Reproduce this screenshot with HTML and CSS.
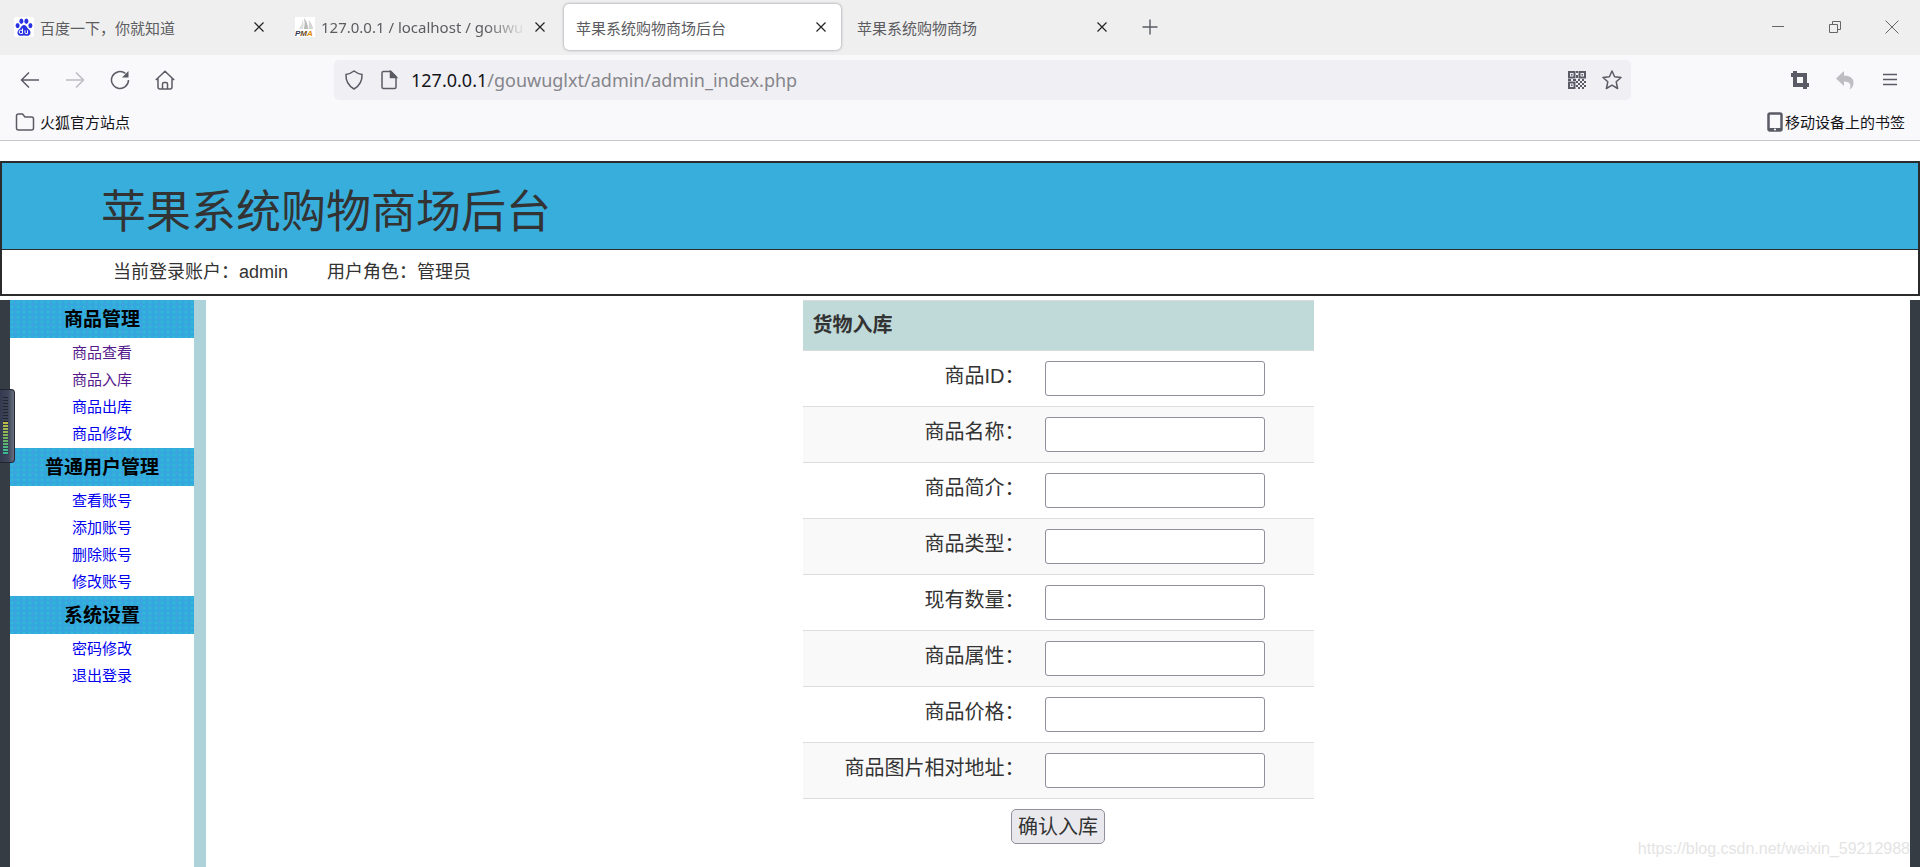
FILE: index.html
```html
<!DOCTYPE html>
<html lang="zh-CN">
<head>
<meta charset="utf-8">
<title>苹果系统购物商场后台</title>
<link rel="stylesheet" href="styles.css">
</head>
<body>
<div class="browser">
  <div class="tab-strip">
    <div class="tab">
      <svg class="favicon" viewBox="0 0 20 20"><rect width="20" height="20" rx="2" fill="#fff"/><g fill="#2932e1"><ellipse cx="3.600" cy="8.600" rx="2" ry="2.600"/><ellipse cx="7.400" cy="4.200" rx="2" ry="2.700"/><ellipse cx="12.400" cy="4.200" rx="2" ry="2.700"/><ellipse cx="16.400" cy="8.600" rx="2" ry="2.600"/><path d="M10 8c2.600 0 3 3 5 4.500 2.300 2 2 5.800-1 6.200-1.600.2-2.600-.3-4-.3s-2.400.5-4 .3c-3-.4-3.300-4.200-1-6.200C7 11 7.400 8 10 8z"/></g><path d="M8.500 11.500v5h-2a1.200 1.500 0 0 1 0-3.200h2M11 13.300v2.300q0 1 1 1h1.500v-3.300" fill="none" stroke="#fff"/></svg>
      <span class="tab-title">百度一下，你就知道</span>
      <button class="icon-button tab-close" aria-label="关闭"><svg class="glyph-small" viewBox="0 0 12 12"><path d="M1.500 1.500l9 9M10.500 1.500l-9 9"/></svg></button>
    </div>
    <div class="tab">
      <svg class="favicon" viewBox="0 0 20 20"><rect width="20" height="20" fill="#fff"/><path d="M4 12q3-4 4-10 1 6 0 10z" fill="#ddd"/><path d="M9 12q1.500-6 0-11 4 5 4 11z" fill="#b9b9b9"/><path d="M13.500 12q1-5 0-9 4 4 4.500 9z" fill="#d5d5d5"/><text class="favicon-text" x="0" y="19" fill="#33364f">P<tspan fill="#6b4522">M</tspan><tspan fill="#e08600">A</tspan></text></svg>
      <span class="tab-title tab-title-fade">127.0.0.1 / localhost / gouwu</span>
      <button class="icon-button tab-close" aria-label="关闭"><svg class="glyph-small" viewBox="0 0 12 12"><path d="M1.500 1.500l9 9M10.500 1.500l-9 9"/></svg></button>
    </div>
    <div class="tab tab-active">
      <span class="tab-title">苹果系统购物商场后台</span>
      <button class="icon-button tab-close" aria-label="关闭"><svg class="glyph-small" viewBox="0 0 12 12"><path d="M1.500 1.500l9 9M10.500 1.500l-9 9"/></svg></button>
    </div>
    <div class="tab">
      <span class="tab-title">苹果系统购物商场</span>
      <button class="icon-button tab-close" aria-label="关闭"><svg class="glyph-small" viewBox="0 0 12 12"><path d="M1.500 1.500l9 9M10.500 1.500l-9 9"/></svg></button>
    </div>
    <button class="icon-button new-tab" aria-label="新建标签页"><svg class="glyph-plus" viewBox="0 0 16 16"><path d="M8 .5v15M.5 8h15"/></svg></button>
    <div class="window-controls">
      <button class="icon-button" aria-label="最小化"><svg class="glyph-window" viewBox="0 0 14 14"><path d="M1 6.500h12"/></svg></button>
      <button class="icon-button" aria-label="还原"><svg class="glyph-window" viewBox="0 0 14 14"><path d="M1.500 4.500h8v8h-8zM4.500 4.500v-3h8v8h-3"/></svg></button>
      <button class="icon-button" aria-label="关闭窗口"><svg class="glyph-window" viewBox="0 0 14 14"><path d="M.5 .5l13 13M13.500 .5l-13 13"/></svg></button>
    </div>
  </div>

  <div class="nav-bar">
    <div class="nav-buttons">
      <button class="icon-button" aria-label="后退"><svg class="glyph" viewBox="0 0 20 20"><path d="M19 10H2M9 2.500L1.500 10 9 17.500"/></svg></button>
      <button class="icon-button is-disabled" aria-label="前进" disabled><svg class="glyph" viewBox="0 0 20 20"><path d="M1 10h17M11 2.500l7.500 7.500-7.500 7.500"/></svg></button>
      <button class="icon-button" aria-label="刷新"><svg class="glyph" viewBox="0 0 20 20"><path d="M18.500 10A8.500 8.500 0 1 1 15.500 3.500"/><path d="M18.500 1v6.500H12z" fill="currentColor" stroke="none"/></svg></button>
      <button class="icon-button" aria-label="主页"><svg class="glyph" viewBox="0 0 20 20"><path d="M.8 10L10 1.200 19.200 10M3 8.500V17q0 2 2 2h10q2 0 2-2V8.500M7.500 19v-5q0-1.500 1.500-1.500h2q1.500 0 1.500 1.500v5"/></svg></button>
    </div>
    <div class="url-bar">
      <svg class="glyph" viewBox="0 0 20 20"><path d="M10 1q4 3 8 3.500Q18.500 14 10 19 1.500 14 2 4.500 6 4 10 1z"/></svg>
      <svg class="glyph" viewBox="0 0 20 20"><path d="M4.500 1.500H12l5 5v10.500q0 1.500-1.500 1.500h-11Q3 18.500 3 17V3q0-1.500 1.500-1.500z"/><path d="M11.500 1.500l6 6h-6z" fill="currentColor"/></svg>
      <div class="url"><span class="url-host">127.0.0.1</span>/gouwuglxt/admin/admin_index.php</div>
      <button class="icon-button" aria-label="二维码"><svg class="glyph" viewBox="0 0 20 20"><path d="M2 2h5.500v5.500H2zM12.500 2H18v5.500h-5.500zM2 12.500h5.500V18H2z" stroke-width="2"/><path d="M4 4h1.500v1.500H4zM14.500 4H16v1.500h-1.500zM4 14.500h1.500V16H4zM9 1h2v2H9zM9 5h2v3H9zM1 9h3v2H1zM6 9h3v2H6zM11 9h2v2h-2zM15 9h2v2h-2zM17 11h2v2h-2zM9 11h2v2H9zM13 11h2v2h-2zM11 13h2v2h-2zM15 13h2v2h-2zM9 15h2v2H9zM13 15h2v2h-2zM17 15h2v2h-2zM11 17h2v2h-2zM15 17h2v2h-2z" fill="currentColor" stroke="none"/></svg></button>
      <button class="icon-button" aria-label="收藏"><svg class="glyph" viewBox="0 0 20 20"><path d="M10 1l2.600 5.800 6.400.7-4.800 4.300 1.400 6.700L10 15.200l-5.600 3.300 1.400-6.700L1 7.500l6.400-.7z" stroke-linejoin="round"/></svg></button>
    </div>
    <div class="tool-buttons">
      <button class="icon-button" aria-label="截图"><svg class="glyph" viewBox="0 0 20 20"><path d="M5 1v14h14M1 5h14v14" stroke-width="4"/></svg></button>
      <button class="icon-button is-disabled" aria-label="撤销" disabled><svg class="glyph" viewBox="0 0 20 20"><path d="M9 1v4.500q9.500 0 9.500 7.500 0 4-4 6.500 1-2.500 1-4-.5-4-6.500-4V16L1 8.500z" fill="currentColor" stroke="none"/></svg></button>
      <button class="icon-button" aria-label="菜单"><svg class="glyph" viewBox="0 0 20 20"><path d="M3 4.500h14M3 9.500h14M3 14.500h14"/></svg></button>
    </div>
  </div>

  <div class="bookmarks">
    <a class="bookmark" href="#"><svg class="glyph" viewBox="0 0 20 20"><path d="M1.500 16V4q0-2 2-2h4l2.500 3h6.500q2 0 2 2v9q0 2-2 2h-13q-2 0-2-2z"/></svg>火狐官方站点</a>
    <a class="bookmark bookmark-mobile" href="#"><svg class="glyph" viewBox="0 0 20 20"><path d="M5 1.500h10q1.500 0 1.500 1.500v14q0 1.500-1.500 1.500H5q-1.500 0-1.500-1.500V3Q3.500 1.500 5 1.500z" stroke-width="2.500"/><path d="M3.500 16h13v3h-13z" fill="currentColor" stroke="none"/><path d="M9 17.500h2" stroke="#fff"/></svg>移动设备上的书签</a>
  </div>
</div>

<header class="site-header">
  <h1 class="site-title">苹果系统购物商场后台</h1>
  <div class="account"><span>当前登录账户：admin</span><span>用户角色：管理员</span></div>
</header>

<div class="workspace">
  <nav class="sidebar">
    <h2 class="menu-heading">商品管理</h2>
    <ul class="menu">
      <li><a class="visited" href="#">商品查看</a></li>
      <li><a class="visited" href="#">商品入库</a></li>
      <li><a href="#">商品出库</a></li>
      <li><a href="#">商品修改</a></li>
    </ul>
    <h2 class="menu-heading">普通用户管理</h2>
    <ul class="menu">
      <li><a href="#">查看账号</a></li>
      <li><a href="#">添加账号</a></li>
      <li><a href="#">删除账号</a></li>
      <li><a href="#">修改账号</a></li>
    </ul>
    <h2 class="menu-heading">系统设置</h2>
    <ul class="menu">
      <li><a href="#">密码修改</a></li>
      <li><a href="#">退出登录</a></li>
    </ul>
  </nav>
  <main class="content">
    <form>
      <table class="stock-table">
        <thead><tr><th colspan="2">货物入库</th></tr></thead>
        <tbody>
          <tr><td class="field-name"><label for="f1">商品ID：</label></td><td class="field-value"><input id="f1" type="text"></td></tr>
          <tr><td class="field-name"><label for="f2">商品名称：</label></td><td class="field-value"><input id="f2" type="text"></td></tr>
          <tr><td class="field-name"><label for="f3">商品简介：</label></td><td class="field-value"><input id="f3" type="text"></td></tr>
          <tr><td class="field-name"><label for="f4">商品类型：</label></td><td class="field-value"><input id="f4" type="text"></td></tr>
          <tr><td class="field-name"><label for="f5">现有数量：</label></td><td class="field-value"><input id="f5" type="text"></td></tr>
          <tr><td class="field-name"><label for="f6">商品属性：</label></td><td class="field-value"><input id="f6" type="text"></td></tr>
          <tr><td class="field-name"><label for="f7">商品价格：</label></td><td class="field-value"><input id="f7" type="text"></td></tr>
          <tr><td class="field-name"><label for="f8">商品图片相对地址：</label></td><td class="field-value"><input id="f8" type="text"></td></tr>
        </tbody>
      </table>
      <div class="actions"><button class="submit" type="submit">确认入库</button></div>
    </form>
  </main>
  <div class="meter"><div class="meter-idle"></div><div class="meter-level"></div></div>
  <div class="watermark">https://blog.csdn.net/weixin_59212988</div>
</div>
</body>
</html>
```

FILE: styles.css
```css
* { box-sizing: border-box; }

body {
  margin: 0;
  min-height: 100vh;
  display: flex;
  flex-direction: column;
  background: #fff;
  color: #333;
  font-family: "Liberation Sans", "Noto Sans CJK SC", sans-serif;
}

button, input { font: inherit; color: inherit; }

/* Browser chrome */
.browser {
  background: #f9f9fb;
  border-bottom: 1px solid #c8c8c9;
  font-family: "Noto Sans", "Noto Sans CJK SC", sans-serif;
  font-size: 15px;
}

.icon-button {
  display: flex;
  align-items: center;
  justify-content: center;
  flex: none;
  padding: 0;
  border: 0;
  background: none;
  color: #5b5b66;
}
.is-disabled { color: #bdbdc2; }

svg { flex: none; }
.glyph, .glyph-small, .glyph-plus, .glyph-window {
  fill: none;
  stroke: currentColor;
}
.glyph { width: 20px; height: 20px; stroke-width: 1.5; color: inherit; }
.glyph-small { width: 12px; height: 12px; stroke-width: 1.2; }
.glyph-plus { width: 16px; height: 16px; stroke-width: 1.4; }
.glyph-window { width: 14px; height: 14px; }

.tab-strip {
  display: flex;
  align-items: center;
  gap: 4px;
  height: 55px;
  padding: 0 0 1px 2px;
  background: #efefef;
}
.tab {
  display: flex;
  align-items: center;
  gap: 6px;
  width: 277px;
  height: 46px;
  padding: 0 12px;
  border-radius: 5px;
  color: #5c5c61;
}
.tab-active {
  background: #fff;
  box-shadow: 0 0 3px #8c8c99;
}
.favicon { width: 20px; height: 20px; }
.favicon-text {
  font: italic 700 8px "Liberation Sans", sans-serif;
}
.tab-title {
  flex: 1;
  white-space: nowrap;
}
.tab-title-fade { mask-image: linear-gradient(to left, transparent, #000 40px); }
.tab-close { width: 16px; height: 24px; color: #222; }
.new-tab { width: 40px; height: 40px; margin-left: 4px; }
.window-controls {
  display: flex;
  margin-left: auto;
}
.window-controls .icon-button { width: 57px; height: 48px; color: #666; }

.nav-bar {
  display: flex;
  align-items: center;
  height: 50px;
}
.nav-buttons {
  display: flex;
  flex: 0 0 334px;
  padding-left: 7px;
}
.nav-buttons .icon-button,
.tool-buttons .icon-button { width: 45px; height: 40px; }
.url-bar {
  display: flex;
  flex: 1;
  align-items: center;
  gap: 15px;
  height: 40px;
  padding: 0 9px 0 10px;
  border-radius: 5px;
  background: #f0f0f4;
  color: #5b5b66;
}
.url {
  flex: 1;
  margin-left: -3px;
  font-size: 18px;
  color: #85858b;
}
.url-host { color: #15141a; }
.tool-buttons {
  display: flex;
  flex: 0 0 289px;
  justify-content: flex-end;
  padding-right: 8px;
}

.bookmarks {
  display: flex;
  align-items: center;
  justify-content: space-between;
  height: 35px;
  padding: 0 15px 2px;
}
.bookmark {
  display: flex;
  align-items: center;
  gap: 5px;
  color: #15141a;
  text-decoration: none;
}
.bookmark-mobile { gap: 0; }
.bookmark .glyph { color: #5b5b66; }

/* Site header */
.site-header {
  margin: 20px 0 4px;
  border: 2px solid #2b2b2e;
}
.site-title {
  height: 87px;
  margin: 0;
  padding: 11px 0 0 99px;
  border-bottom: 1px solid #2b2b2e;
  background: #38aedd;
  font-size: 45px;
  font-weight: 400;
  line-height: 77px;
}
.account {
  display: flex;
  gap: 39px;
  padding-left: 111px;
  font-size: 18px;
  line-height: 44px;
}

/* Work area */
.workspace {
  position: relative;
  display: flex;
  flex: 1;
  border: solid #363c44;
  border-width: 0 10px;
}
.sidebar {
  flex: 0 0 196px;
  border-right: 12px solid #aed2da;
  text-align: center;
}
.menu-heading {
  margin: 0;
  padding-top: 2px;
  background-color: #35a7df;
  background-image:
    radial-gradient(circle at 2px 2px, #2fb8d8 1px, transparent 2px),
    radial-gradient(circle at 5px 4px, #43a3e2 1px, transparent 2px);
  background-size: 6px 5px, 9px 7px;
  color: #000;
  font-size: 19px;
  line-height: 36px;
}
.menu {
  margin: 0;
  padding: 1px 0;
  list-style: none;
  font-size: 15px;
  line-height: 27px;
}
.menu a { color: #00e; text-decoration: none; }
.menu .visited { color: #551a8b; }

.content {
  flex: 1;
  display: flex;
  justify-content: center;
  font-size: 20px;
}
.stock-table {
  width: 511px;
  border-spacing: 0;
}
.stock-table th {
  padding: 0 10px;
  border: solid #d9dcdc;
  border-width: 1px 0;
  background: #c0d9d9;
  text-align: left;
  line-height: 49px;
}
.stock-table td {
  padding: 10px 12px;
  border-bottom: 1px solid #ddd;
  vertical-align: top;
}
.stock-table tr:nth-child(even) td { background: #f9f9f9; }
.stock-table .field-name {
  width: 230px;
  padding-right: 8px;
  text-align: right;
  line-height: 30px;
}
.field-value input {
  display: block;
  width: 220px;
  height: 35px;
  border: 1px solid #8f8f9d;
  border-radius: 3px;
  background: #fff;
}
.actions {
  display: flex;
  justify-content: center;
  padding-top: 10px;
}
.submit {
  height: 35px;
  padding: 0 6px;
  border: 1px solid #8f8f9d;
  border-radius: 5px;
  background: #e9e9ed;
  line-height: 32px;
}

/* Floating level meter on the left edge */
.meter {
  position: absolute;
  top: 89px;
  left: -10px;
  display: flex;
  flex-direction: column;
  justify-content: center;
  width: 15px;
  height: 74px;
  padding-left: 3px;
  border: 1px solid #222630;
  border-left: 0;
  border-radius: 0 4px 4px 0;
  background: linear-gradient(to right, #343b50, #3f465a 60%, #697080);
}
.meter-idle, .meter-level { width: 5px; }
.meter-idle {
  height: 25px;
  background: repeating-linear-gradient(#22262f 0 1px, #3c4356 1px 3px);
}
.meter-level {
  height: 33px;
  background:
    repeating-linear-gradient(transparent 0 2px, #343b50 2px 3px),
    linear-gradient(#c3bb45, #70b45c 50%, #35b89c);
}

.watermark {
  position: absolute;
  right: 0;
  bottom: 8px;
  font-size: 16px;
  line-height: 20px;
  color: #e4e4e4;
}
```
